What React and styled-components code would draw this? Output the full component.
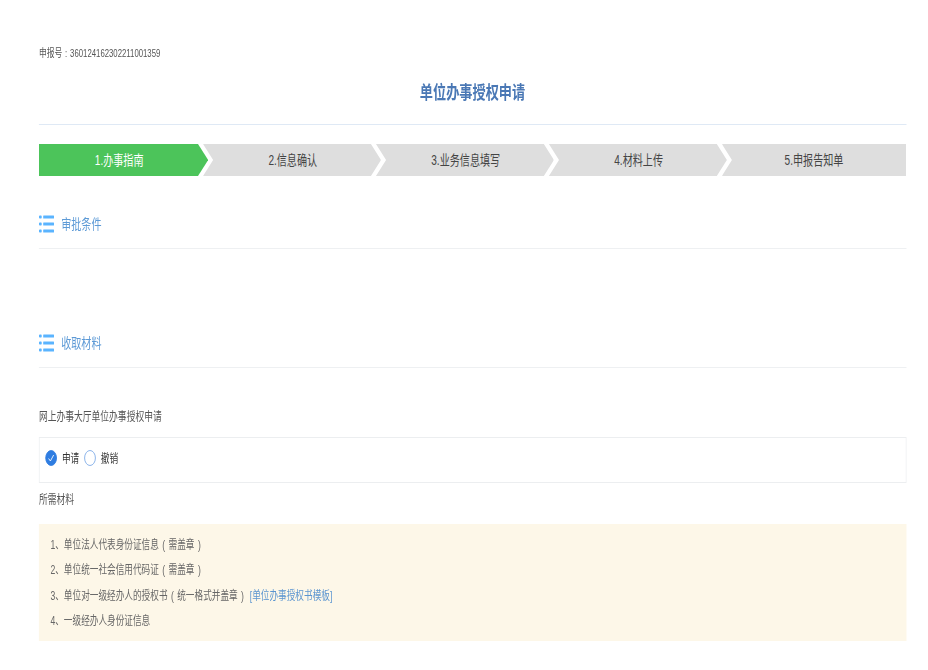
import styled, { createGlobalStyle } from "styled-components";

const GlobalStyle = createGlobalStyle`
  html, body {
    margin: 0;
    padding: 0;
    background: #fff;
    overflow: hidden;
  }
  body {
    font-family: "Liberation Sans", "Noto Sans CJK SC", sans-serif;
  }
`;

// the whole page is squeezed sideways, as in the picture
const Page = styled.div`
  width: 1289px;
  box-sizing: border-box;
  padding: 46px 0 0 54px;
  transform: scaleX(0.72);
  transform-origin: left top;
  filter: blur(0.3px);
`;

const Content = styled.div`
  width: 1204.5px;
`;

const ReportNo = styled.div`
  font-size: 10.8px;
  line-height: 14px;
  word-spacing: 1px;
  color: #555;
`;

const Title = styled.h1`
  margin: 21px 0 0;
  padding-bottom: 19px;
  border-bottom: 1px solid #dfe9f5;
  font-size: 18.3px;
  line-height: 24px;
  font-weight: 700;
  text-align: center;
  color: #4a78b5;
`;

const Steps = styled.div`
  display: flex;
  margin-top: 19px;
  height: 32px;
`;

const Step = styled.div`
  flex: ${(props) => (props.$last ? "1" : "none")};
  width: ${(props) => (props.$first ? "235px" : "247.2px")};
  margin-left: ${(props) => (props.$first ? "0" : "-7px")};
  padding-right: ${(props) => (props.$first ? "12px" : "0")};
  padding-left: ${(props) => (props.$first || props.$last ? "0" : "2px")};
  padding-bottom: 2px;
  box-sizing: border-box;
  display: flex;
  align-items: center;
  justify-content: center;
  font-size: 14px;
  color: ${(props) => (props.$active ? "#fff" : "#444")};
  background: ${(props) => (props.$active ? "#4cc45a" : "#dedede")};
  clip-path: ${(props) =>
    props.$first
      ? "polygon(0 0, calc(100% - 14px) 0, 100% 50%, calc(100% - 14px) 100%, 0 100%)"
      : props.$last
        ? "polygon(0 0, 100% 0, 100% 100%, 0 100%, 14px 50%)"
        : "polygon(0 0, calc(100% - 14px) 0, 100% 50%, calc(100% - 14px) 100%, 0 100%, 14px 50%)"};
`;

const SectionHead = styled.div`
  display: flex;
  align-items: center;
  gap: 10px;
  height: 32px;
  margin-top: ${(props) => props.$top}px;
  padding-bottom: 8px;
  border-bottom: 1px solid #eef0f2;
  font-size: 14px;
  color: #5d9ad6;
`;

const SectionName = styled.span`
  position: relative;
  top: -1px;
`;

const Label = styled.div`
  font-size: 12.2px;
  line-height: 16px;
  color: #555;
  margin-top: ${(props) => props.$top}px;
`;

const RadioBox = styled.div`
  display: flex;
  align-items: center;
  height: 46px;
  box-sizing: border-box;
  margin-top: 12px;
  padding: 0 0 4px 8px;
  border: 1px solid #eceef0;
  font-size: 12px;
  color: #333;
`;

const RadioDot = styled.span`
  width: 16px;
  height: 16px;
  box-sizing: border-box;
  border-radius: 50%;
  display: flex;
  align-items: center;
  justify-content: center;
  border: 1px solid ${(props) => (props.$checked ? "#2f7de1" : "#7aa9e6")};
  background: ${(props) => (props.$checked ? "#2f7de1" : "#fff")};
`;

const RadioText = styled.span`
  margin: 0 7px;
  position: relative;
  top: -1px;
`;

const Notice = styled.div`
  margin-top: 16px;
  height: 117px;
  box-sizing: border-box;
  padding: 9px 16px 0;
  background: #fdf7e8;
  font-size: 12px;
  word-spacing: 1.4px;
  color: #666;
`;

const NoticeRow = styled.div`
  height: 25.4px;
  line-height: 25.4px;
`;

const TemplateLink = styled.a`
  color: #5b95d0;
  text-decoration: none;
  margin-left: 8px;
`;

function ListIcon() {
  return (
    <svg width="21" height="18" viewBox="0 0 21 18" fill="#5ab4ff">
      <rect x="0" y="0.5" width="4" height="3" rx="1.2" />
      <rect x="6" y="0.5" width="15" height="3" rx="0.5" />
      <rect x="0" y="7.5" width="4" height="3" rx="1.2" />
      <rect x="6" y="7.5" width="15" height="3" rx="0.5" />
      <rect x="0" y="14.5" width="4" height="3" rx="1.2" />
      <rect x="6" y="14.5" width="15" height="3" rx="0.5" />
    </svg>
  );
}

const steps = ["1.办事指南", "2.信息确认", "3.业务信息填写", "4.材料上传", "5.申报告知单"];

function App() {
  return (
    <Page>
      <GlobalStyle />
      <Content>
        <ReportNo>申报号 : 360124162302211001359</ReportNo>
        <Title>单位办事授权申请</Title>
        <Steps>
          {steps.map((s, i) => (
            <Step key={s} $first={i === 0} $last={i === 4} $active={i === 0}>
              {s}
            </Step>
          ))}
        </Steps>
        <SectionHead $top={32}>
          <ListIcon />
          <SectionName>审批条件</SectionName>
        </SectionHead>
        <SectionHead $top={78}>
          <ListIcon />
          <SectionName>收取材料</SectionName>
        </SectionHead>
        <Label $top={41}>网上办事大厅单位办事授权申请</Label>
        <RadioBox>
          <RadioDot $checked>
            <svg width="10" height="10" viewBox="0 0 10 10" fill="none" stroke="#fff" strokeWidth="1">
              <path d="M1.5 5.5 4 8 8.5 2" />
            </svg>
          </RadioDot>
          <RadioText>申请</RadioText>
          <RadioDot />
          <RadioText>撤销</RadioText>
        </RadioBox>
        <Label $top={9}>所需材料</Label>
        <Notice>
          <NoticeRow>1、单位法人代表身份证信息 ( 需盖章 )</NoticeRow>
          <NoticeRow>2、单位统一社会信用代码证 ( 需盖章 )</NoticeRow>
          <NoticeRow>
            3、单位对一级经办人的授权书 ( 统一格式并盖章 )
            <TemplateLink href="#">[单位办事授权书模板]</TemplateLink>
          </NoticeRow>
          <NoticeRow>4、一级经办人身份证信息</NoticeRow>
        </Notice>
      </Content>
    </Page>
  );
}

export default App;
